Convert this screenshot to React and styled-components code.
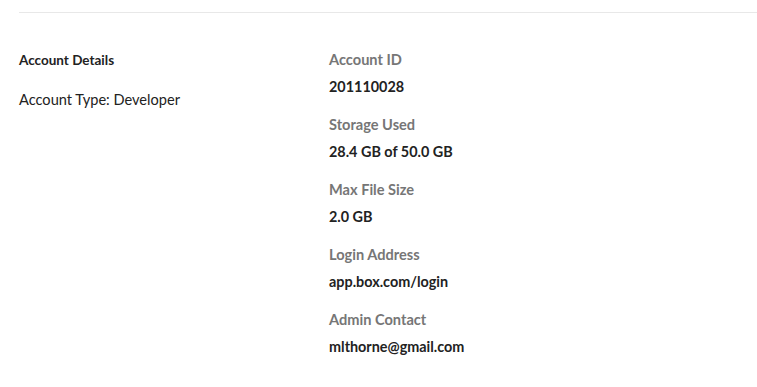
import styled, { createGlobalStyle } from "styled-components";

const GlobalStyle = createGlobalStyle`
  body {
    margin: 0;
    background: #fff;
    font-family: Lato, "Noto Sans", sans-serif;
    color: #222;
  }
`;

const Page = styled.div`
  padding: 12px 0 0 19px;
`;

const Divider = styled.hr`
  margin: 0;
  border: none;
  border-top: 1px solid #e8e8e8;
`;

const Section = styled.div`
  display: grid;
  grid-template-columns: 310px 1fr;
  padding-top: 38px;
`;

const Aside = styled.div`
  display: flex;
  flex-direction: column;
  gap: 22px;
`;

const SectionTitle = styled.h3`
  margin: 0;
  font-size: 13.5px;
  font-weight: 700;
  line-height: 18px;
`;

const Note = styled.p`
  margin: 0;
  font-size: 14.6px;
  line-height: 18px;
`;

const Fields = styled.dl`
  margin: 0;
  display: flex;
  flex-direction: column;
  gap: 20px;
`;

const Field = styled.div`
  display: flex;
  flex-direction: column;
  gap: 9px;
`;

const Label = styled.dt`
  font-size: 14.6px;
  font-weight: 700;
  color: #767676;
  line-height: 18px;
`;

const Value = styled.dd`
  margin: 0;
  font-size: 14.4px;
  font-weight: 700;
  line-height: 18px;
`;

const fields = [
  ["Account ID", "201110028"],
  ["Storage Used", "28.4 GB of 50.0 GB"],
  ["Max File Size", "2.0 GB"],
  ["Login Address", "app.box.com/login"],
  ["Admin Contact", "mlthorne@gmail.com"],
];

export default function App() {
  return (
    <>
      <GlobalStyle />
      <Page>
        <Divider />
        <Section>
          <Aside>
            <SectionTitle>Account Details</SectionTitle>
            <Note>Account Type: Developer</Note>
          </Aside>
          <Fields>
            {fields.map(([label, value]) => (
              <Field key={label}>
                <Label>{label}</Label>
                <Value>{value}</Value>
              </Field>
            ))}
          </Fields>
        </Section>
      </Page>
    </>
  );
}
